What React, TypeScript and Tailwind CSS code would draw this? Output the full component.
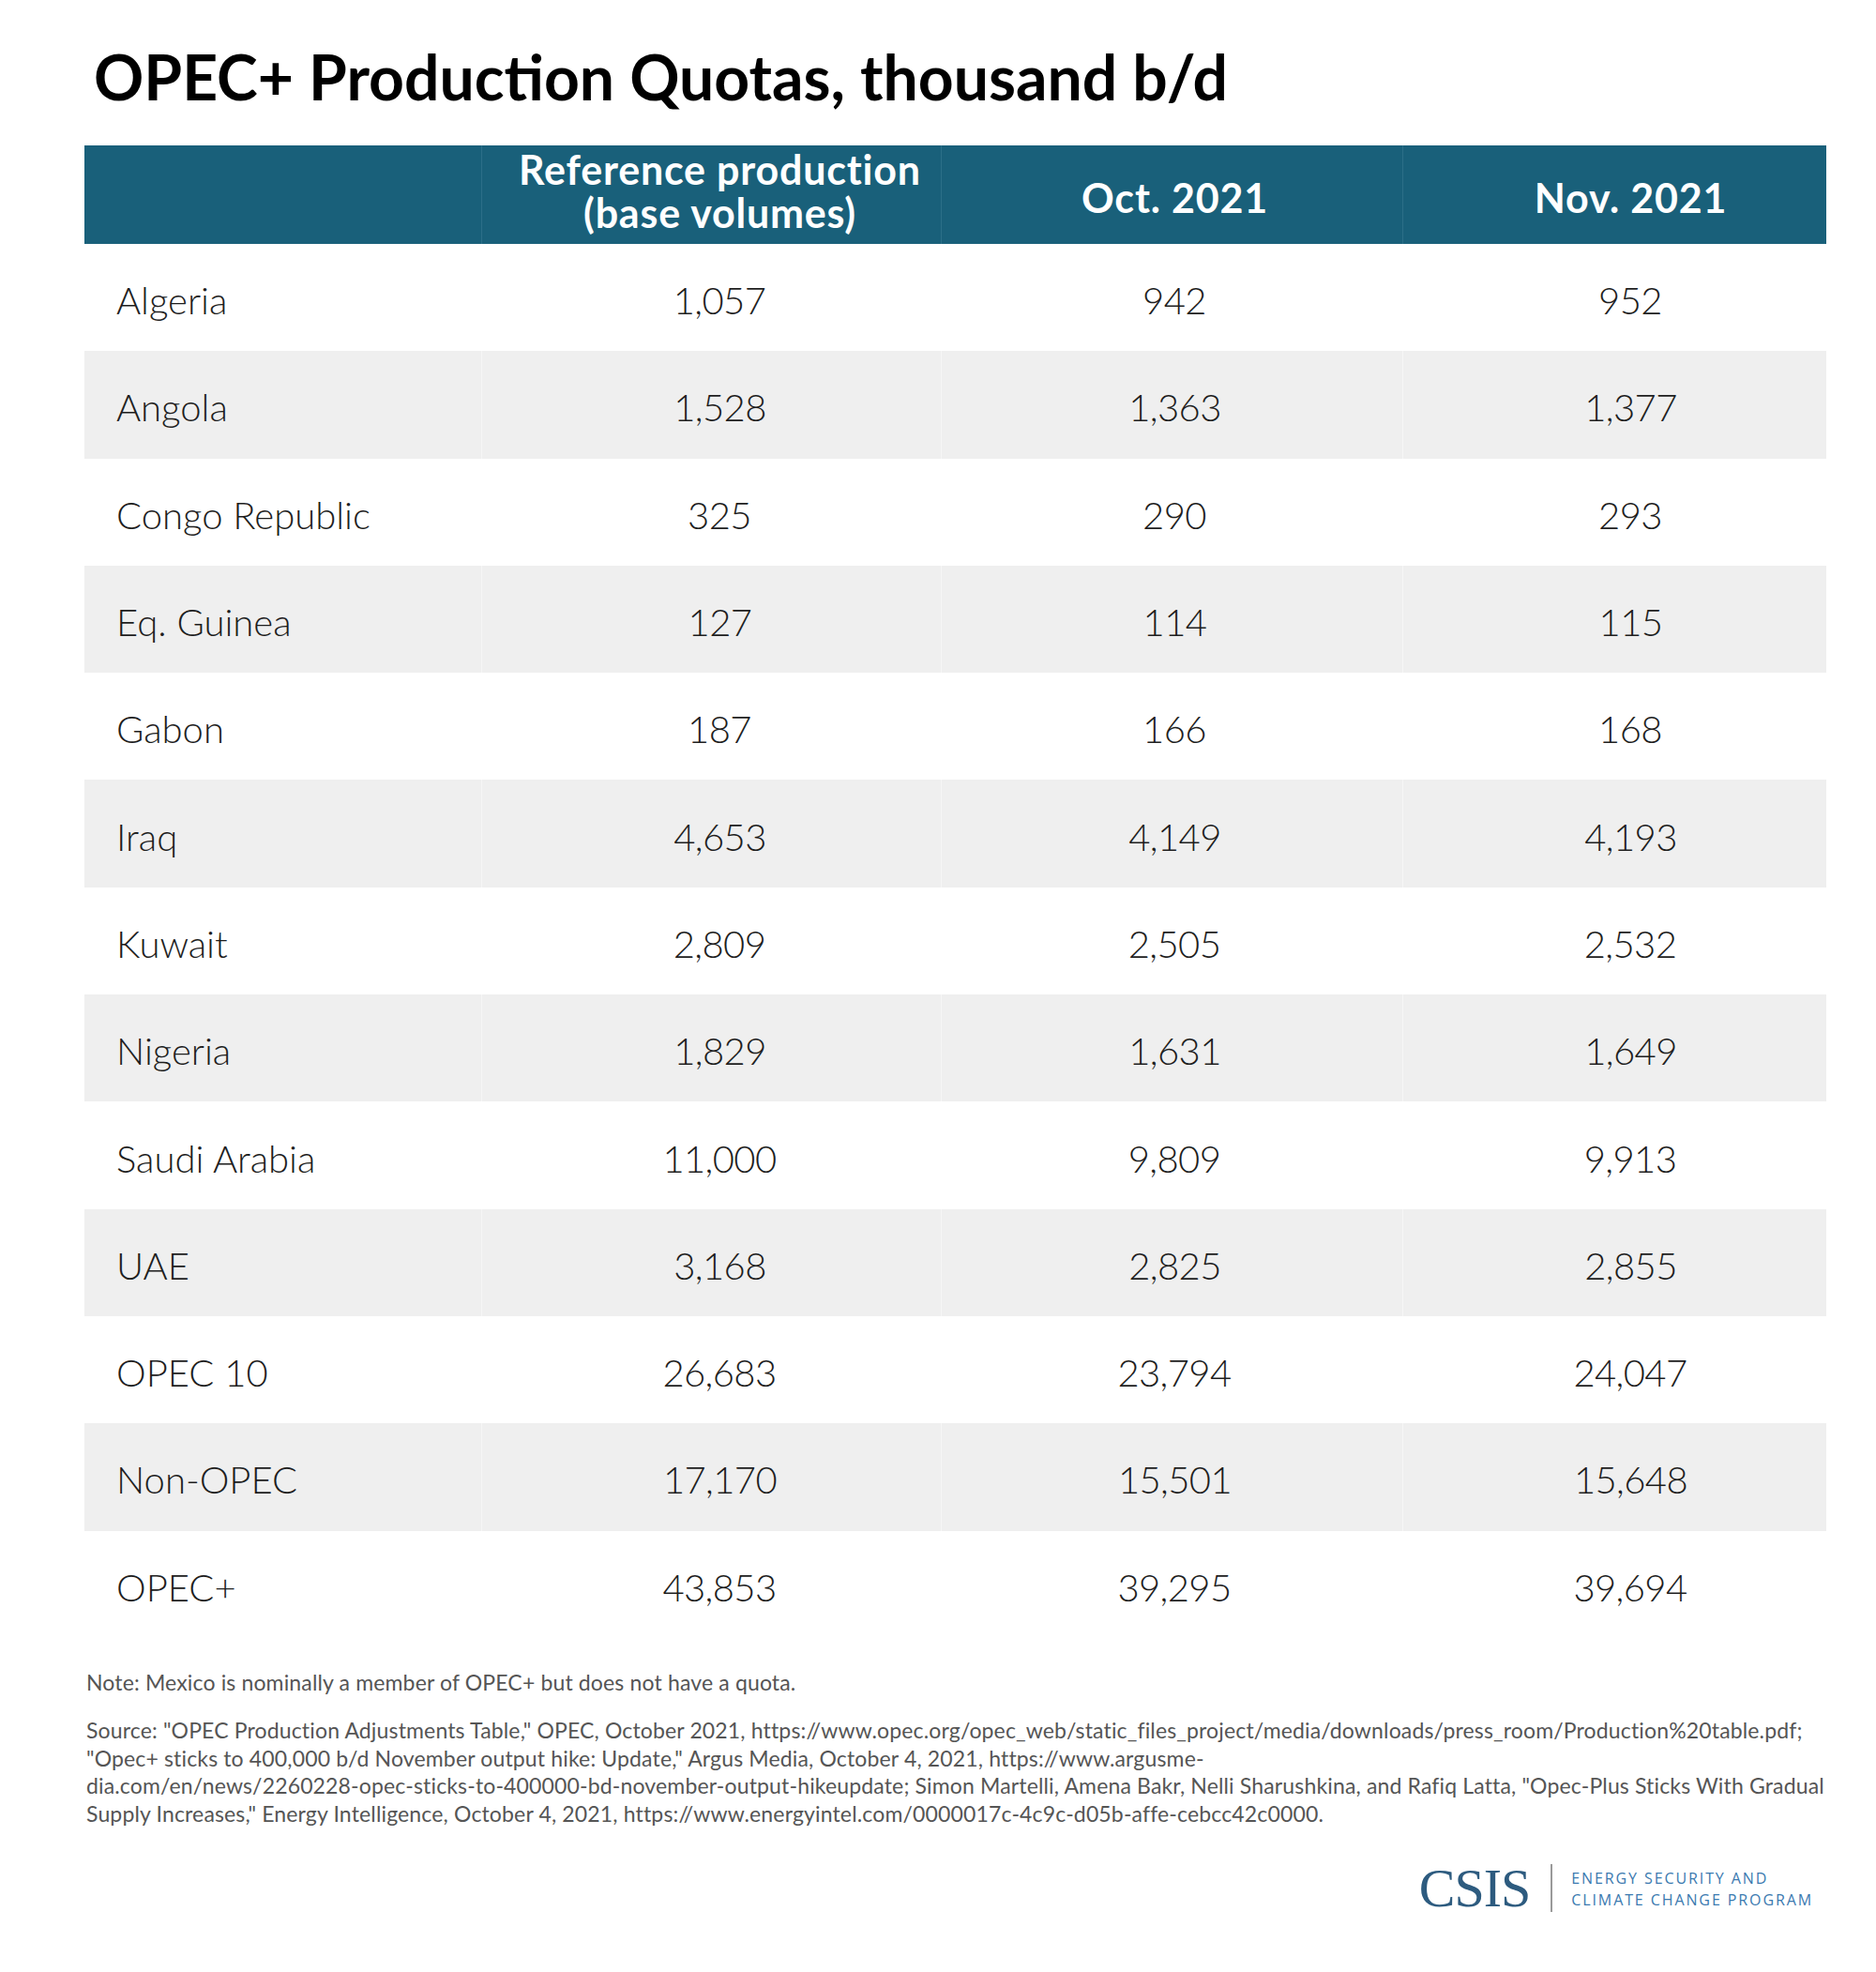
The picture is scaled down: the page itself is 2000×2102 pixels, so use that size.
import React from "react";

type Row = { name: string; base: string; oct: string; nov: string };

const rows: Row[] = [
  { name: "Algeria", base: "1,057", oct: "942", nov: "952" },
  { name: "Angola", base: "1,528", oct: "1,363", nov: "1,377" },
  { name: "Congo Republic", base: "325", oct: "290", nov: "293" },
  { name: "Eq. Guinea", base: "127", oct: "114", nov: "115" },
  { name: "Gabon", base: "187", oct: "166", nov: "168" },
  { name: "Iraq", base: "4,653", oct: "4,149", nov: "4,193" },
  { name: "Kuwait", base: "2,809", oct: "2,505", nov: "2,532" },
  { name: "Nigeria", base: "1,829", oct: "1,631", nov: "1,649" },
  { name: "Saudi Arabia", base: "11,000", oct: "9,809", nov: "9,913" },
  { name: "UAE", base: "3,168", oct: "2,825", nov: "2,855" },
  { name: "OPEC 10", base: "26,683", oct: "23,794", nov: "24,047" },
  { name: "Non-OPEC", base: "17,170", oct: "15,501", nov: "15,648" },
  { name: "OPEC+", base: "43,853", oct: "39,295", nov: "39,694" },
];

const sourceLines = [
  'Source: "OPEC Production Adjustments Table," OPEC, October 2021, https://www.opec.org/opec_web/static_files_project/media/downloads/press_room/Production%20table.pdf;',
  '"Opec+ sticks to 400,000 b/d November output hike: Update," Argus Media, October 4, 2021, https://www.argusme-',
  'dia.com/en/news/2260228-opec-sticks-to-400000-bd-november-output-hikeupdate; Simon Martelli, Amena Bakr, Nelli Sharushkina, and Rafiq Latta, "Opec-Plus Sticks With Gradual',
  'Supply Increases," Energy Intelligence, October 4, 2021, https://www.energyintel.com/0000017c-4c9c-d05b-affe-cebcc42c0000.',
];

const DataRow = ({ row, shaded }: { row: Row; shaded: boolean }) => {
  const sep = shaded ? "border-l border-[#f6f6f6]" : "";
  return (
    <div
      className={`grid grid-cols-[423px_490px_492px_452px] h-[114.3px] text-[40px] font-light text-[#1e1e1e] leading-[40px] ${
        shaded ? "bg-[#efefef]" : "bg-white"
      }`}
    >
      <div className="flex items-center pl-[34px] pt-[6px]">{row.name}</div>
      <div className={`flex items-center justify-center pl-[18px] pt-[6px] tracking-[-0.6px] ${sep}`}>{row.base}</div>
      <div className={`flex items-center justify-center pl-[6px] pt-[6px] tracking-[-0.6px] ${sep}`}>{row.oct}</div>
      <div className={`flex items-center justify-center pl-[34px] pt-[6px] tracking-[-0.6px] ${sep}`}>{row.nov}</div>
    </div>
  );
};

export default function App() {
  return (
    <div className="w-[2000px] h-[2102px] bg-white font-['Lato',sans-serif] text-black">
      {/* Title */}
      <div className="pt-[49px] pl-[100px]">
        <h1 className="text-[66px] leading-[66px] font-bold">
          OPEC+ Production Quotas, thousand b/d
        </h1>
      </div>

      {/* Table */}
      <div className="ml-[90px] mt-[40px] w-[1857px]">
        <div className="grid grid-cols-[423px_490px_492px_452px] h-[105px] bg-[#19607a] text-white font-bold text-[43px] leading-[46px] tracking-[0.8px]">
          <div />
          <div className="flex flex-col items-center justify-center pl-[18px] pb-[8px] border-l border-[#2c6f88] text-center">
            <span>Reference production</span>
            <span>(base volumes)</span>
          </div>
          <div className="flex items-center justify-center pl-[6px] pt-[6px] border-l border-[#2c6f88]">
            Oct. 2021
          </div>
          <div className="flex items-center justify-center pl-[34px] pt-[6px] border-l border-[#2c6f88]">
            Nov. 2021
          </div>
        </div>
        {rows.map((r, i) => (
          <DataRow key={r.name} row={r} shaded={i % 2 === 1} />
        ))}
      </div>

      {/* Notes */}
      <div className="pl-[92px] mt-[33px] text-[23px] leading-[29.5px] tracking-[0.15px] text-[#555555]">
        <p>Note: Mexico is nominally a member of OPEC+ but does not have a quota.</p>
        <div className="mt-[22px]">
          {sourceLines.map((l) => (
            <p key={l} className="whitespace-nowrap">
              {l}
            </p>
          ))}
        </div>
      </div>

      {/* Logo */}
      <div className="mt-[36px] flex justify-end items-start pr-[67px]">
        <span className="font-['Liberation_Serif',serif] text-[58px] leading-[58px] text-[#2d5b7f] tracking-[-1px]">
          CSIS
        </span>
        <span className="mt-[3px] ml-[22px] w-[2px] h-[51px] bg-[#9a9a9a]" />
        <div className="ml-[20px] mt-[7px] font-['Open_Sans',sans-serif] text-[16px] leading-[23px] tracking-[1.9px] text-[#3b7ab0]">
          <div>ENERGY SECURITY AND</div>
          <div>CLIMATE CHANGE PROGRAM</div>
        </div>
      </div>
    </div>
  );
}
